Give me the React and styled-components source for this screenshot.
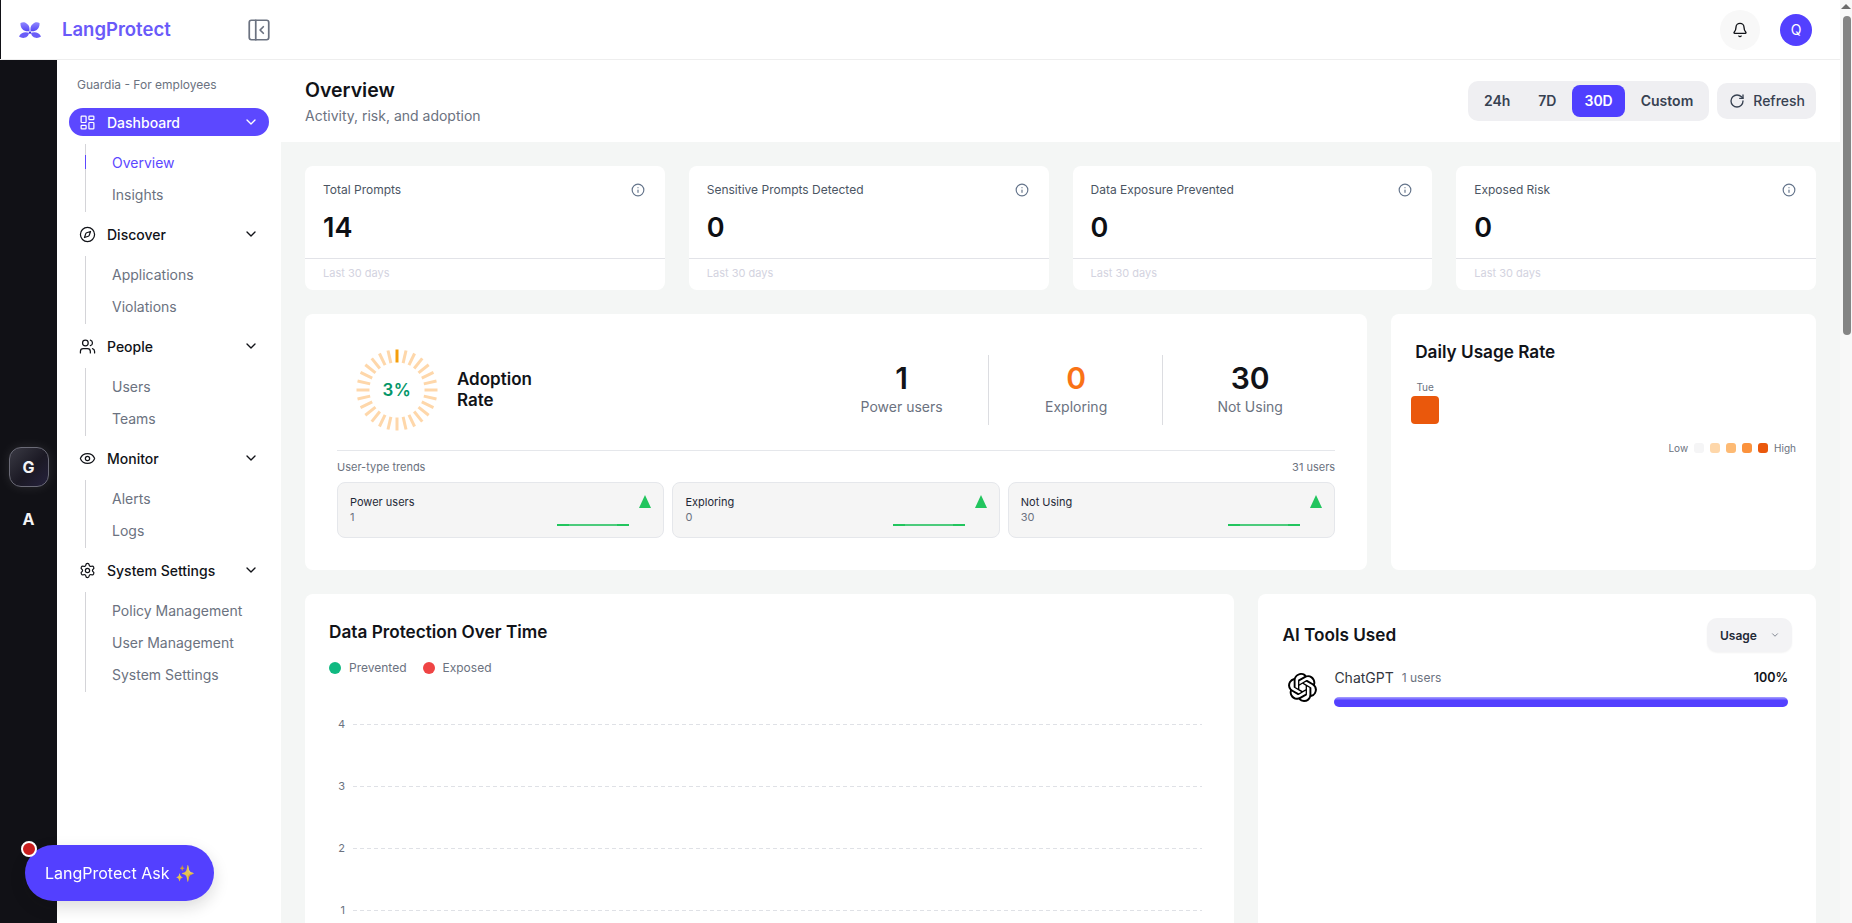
import styled, { createGlobalStyle } from "styled-components";
import {
  Bell,
  ChevronDown,
  Compass,
  Eye,
  Info,
  LayoutDashboard,
  PanelLeftClose,
  RotateCw,
  Settings,
  Users,
} from "lucide-react";
import { SiOpenai } from "react-icons/si";

const GlobalStyle = createGlobalStyle`
  * {
    box-sizing: border-box;
  }
  html,
  body {
    margin: 0;
    height: 100%;
    overflow: hidden;
  }
  body {
    font-family: Inter, "Noto Sans", sans-serif;
    color: #111318;
    background: #fff;
  }
`;

const Shell = styled.div`
  display: flex;
  height: 100vh;
  overflow: hidden;
`;

const Viewport = styled.div`
  flex: 1;
  min-width: 0;
  display: flex;
  flex-direction: column;
`;

const TopBar = styled.header`
  flex: 0 0 60px;
  display: flex;
  align-items: center;
  background: #fff;
  border-bottom: 1px solid #eeeeee;
`;

const Brand = styled.div`
  width: 281px;
  height: 100%;
  display: flex;
  align-items: center;
  padding-left: 18px;
  border-left: 1px solid #111116;
`;

const BrandName = styled.span`
  margin: 0 0 2px 21px;
  font-size: 18.5px;
  font-weight: 600;
  color: #6a5af9;
`;

const Collapse = styled.div`
  margin-left: auto;
  margin-right: 9px;
  display: flex;
  color: #6b7280;
`;

const TopActions = styled.div`
  margin-left: auto;
  margin-right: 28px;
  display: flex;
  align-items: center;
  gap: 20px;
`;

const BellButton = styled.div`
  width: 40px;
  height: 40px;
  border-radius: 50%;
  background: #f8f8f8;
  display: flex;
  align-items: center;
  justify-content: center;
  color: #111318;
`;

const Avatar = styled.div`
  width: 32px;
  height: 32px;
  border-radius: 50%;
  background: #5340ff;
  color: #fff;
  font-size: 14px;
  font-weight: 400;
  display: flex;
  align-items: center;
  justify-content: center;
`;

const Body = styled.div`
  flex: 1;
  min-height: 0;
  display: flex;
`;

const Rail = styled.nav`
  flex: 0 0 57px;
  background: #111116;
  display: flex;
  flex-direction: column;
  align-items: center;
  justify-content: center;
  gap: 12px;
  padding: 3px 0 0 0;
`;

const RailButton = styled.div`
  width: 40px;
  height: 40px;
  border-radius: 12px;
  display: flex;
  align-items: center;
  justify-content: center;
  font-size: 16px;
  font-weight: 700;
  color: #f4f4f5;
  border: 1px solid ${(p) => (p.$active ? "#6b6b77" : "transparent")};
  background: ${(p) =>
    p.$active ? "linear-gradient(135deg, #3a3a44 0%, #1b1924 55%, #25213d 100%)" : "transparent"};
  box-shadow: ${(p) => (p.$active ? "0 0 12px rgba(255, 255, 255, 0.1)" : "none")};
`;

const Sidebar = styled.aside`
  flex: 0 0 224px;
  background: #fff;
  padding: 17px 12px 0;
`;

const SidebarLabel = styled.div`
  margin: 0 0 15px 8px;
  font-size: 12px;
  line-height: 16px;
  color: #6b7280;
`;

const NavSection = styled.div`
  margin-bottom: 8px;
`;

const NavHeader = styled.div`
  height: 28px;
  display: flex;
  align-items: center;
  gap: 11px;
  padding: 0 10px;
  border-radius: 14px;
  font-size: 14px;
  font-weight: ${(p) => (p.$active ? 500 : 450)};
  color: ${(p) => (p.$active ? "#fff" : "#111318")};
  background: ${(p) => (p.$active ? "#5c48ff" : "transparent")};
`;

const NavChevron = styled(ChevronDown)`
  margin-left: auto;
`;

const SubList = styled.div`
  margin: 8px 0 0 16px;
  padding: 2px 0 2px 26px;
  border-left: 1px solid #d4d4d8;
`;

const SubItem = styled.div`
  position: relative;
  height: 32px;
  display: flex;
  align-items: center;
  font-size: 14px;
  font-weight: 400;
  color: ${(p) => (p.$active ? "#5c48ff" : "#6b7280")};

  &::before {
    content: "";
    display: ${(p) => (p.$active ? "block" : "none")};
    position: absolute;
    left: -27px;
    top: 9px;
    width: 1px;
    height: 14px;
    background: #5c48ff;
  }
`;

const AskWrap = styled.div`
  position: fixed;
  left: 25px;
  bottom: 22px;
`;

const AskButton = styled.div`
  width: 189px;
  height: 56px;
  border-radius: 28px;
  background: #5340ff;
  color: #fff;
  font-size: 16px;
  display: flex;
  align-items: center;
  padding-left: 20px;
  white-space: nowrap;
  box-shadow: 0 6px 16px rgba(17, 17, 22, 0.15);
`;

const AskSpark = styled.span`
  margin-left: 6px;
  opacity: 0.85;
`;

const AskDot = styled.span`
  position: absolute;
  left: -4px;
  top: -4px;
  width: 16px;
  height: 16px;
  border-radius: 50%;
  background: #c81e1e;
  border: 2px solid #fff;
`;

const Main = styled.main`
  flex: 1;
  min-width: 0;
  display: flex;
  flex-direction: column;
  overflow: hidden;
`;

const PageHead = styled.div`
  flex: 0 0 82px;
  display: flex;
  align-items: center;
  justify-content: space-between;
  padding: 0 24px;
  background: #fff;
`;

const PageHeadText = styled.div`
  padding-top: 1px;
`;

const PageTitle = styled.h1`
  margin: 0;
  font-size: 19.5px;
  line-height: 26px;
  font-weight: 600;
  color: #111318;
`;

const PageSub = styled.p`
  margin: 3px 0 0;
  font-size: 14px;
  line-height: 20px;
  color: #6b7280;
`;

const HeadActions = styled.div`
  display: flex;
  align-items: center;
  gap: 8px;
`;

const RangeGroup = styled.div`
  display: flex;
  gap: 4px;
  padding: 4px;
  border-radius: 10px;
  background: #efeff2;
`;

const RangeButton = styled.div`
  height: 32px;
  padding: 0 12px 2px;
  display: flex;
  align-items: center;
  border-radius: 8px;
  font-size: 14px;
  font-weight: 600;
  color: ${(p) => (p.$active ? "#fff" : "#374151")};
  background: ${(p) => (p.$active ? "#4f3fff" : "transparent")};
`;

const RefreshButton = styled.div`
  height: 36px;
  padding: 0 11px 1px 12px;
  display: flex;
  align-items: center;
  gap: 8px;
  border-radius: 10px;
  background: #efeff2;
  font-size: 14px;
  font-weight: 500;
  color: #374151;
`;

const Content = styled.div`
  flex: 1;
  background: #f4f6f5;
  padding: 24px;
  display: flex;
  flex-direction: column;
  gap: 24px;
`;

const StatGrid = styled.div`
  display: grid;
  grid-template-columns: repeat(4, 1fr);
  gap: 24px;
`;

const Card = styled.section`
  background: #fff;
  border-radius: 8px;
`;

const StatTop = styled.div`
  height: 93px;
  padding: 16px 20px 0 18px;
  border-bottom: 1px solid #e2e3e8;
`;

const StatHead = styled.div`
  display: flex;
  align-items: center;
  justify-content: space-between;
  font-size: 12px;
  line-height: 16px;
  font-weight: 400;
  color: #4b5563;
`;

const StatValue = styled.div`
  margin-top: 13px;
  font-size: 27px;
  line-height: 34px;
  font-weight: 600;
  color: #0d0f14;
`;

const StatFoot = styled.div`
  height: 31px;
  padding: 0 0 3px 18px;
  display: flex;
  align-items: center;
  font-size: 11px;
  color: #d3d3e0;
`;

const InsightRow = styled.div`
  display: grid;
  grid-template-columns: 5fr 2fr;
  gap: 24px;
`;

const AdoptionCard = styled(Card)`
  height: 256px;
  padding: 32px 32px 0;
`;

const AdoptionTop = styled.div`
  height: 105px;
  display: flex;
  align-items: flex-start;
  border-bottom: 1px solid #e5e7eb;
`;

const GaugeWrap = styled.div`
  position: relative;
  width: 84px;
  height: 84px;
  margin: 2px 18px 0 18px;
`;

const GaugeValue = styled.div`
  position: absolute;
  inset: 0;
  display: flex;
  align-items: center;
  justify-content: center;
  font-size: 17px;
  font-weight: 600;
  letter-spacing: 0.5px;
  color: #059669;
`;

const AdoptionLabel = styled.div`
  align-self: flex-start;
  margin-top: 23px;
  font-size: 17px;
  line-height: 21px;
  font-weight: 600;
  color: #111318;
`;

const AdoptionStats = styled.div`
  margin: 9px -1px 0 auto;
  display: flex;
`;

const AdoptionStat = styled.div`
  width: 174px;
  height: 70px;
  padding-left: 1px;
  display: flex;
  flex-direction: column;
  align-items: center;
  border-left: ${(p) => (p.$first ? "none" : "1px solid #dcdde1")};
`;

const AdoptionNumber = styled.div`
  margin-top: 5px;
  font-size: 30px;
  line-height: 36px;
  font-weight: 600;
  color: ${(p) => p.$color || "#111318"};
`;

const AdoptionName = styled.div`
  margin-top: 1px;
  font-size: 14px;
  line-height: 20px;
  color: #6b7280;
`;

const TrendHead = styled.div`
  display: flex;
  justify-content: space-between;
  margin: 9px 0 8px;
  font-size: 11px;
  line-height: 14px;
  color: #6b7280;
`;

const TrendGrid = styled.div`
  display: grid;
  grid-template-columns: repeat(3, 1fr);
  gap: 8px;
`;

const TrendCard = styled.div`
  height: 56px;
  display: flex;
  justify-content: space-between;
  padding: 0 12px;
  border: 1px solid #e5e7eb;
  border-radius: 8px;
  background: #f5f5f5;
`;

const TrendText = styled.div`
  padding-top: 12px;
  font-size: 11px;
  line-height: 15px;
  color: #1f2937;

  span {
    display: block;
    color: #6b7280;
  }
`;

const TrendGraph = styled.div`
  display: flex;
  align-items: flex-start;
  gap: 10px;
`;

const Spark = styled.div`
  width: 72px;
  height: 2px;
  margin-top: 41px;
  background: linear-gradient(
    90deg,
    #22c55e 0 12px,
    #4ccb7c 12px 60px,
    #22c55e 60px 72px
  );
`;

const UpMark = styled.div`
  width: 0;
  height: 0;
  margin-top: 12px;
  border-left: 6px solid transparent;
  border-right: 6px solid transparent;
  border-bottom: 13px solid #22c55e;
`;

const DailyCard = styled(Card)`
  padding: 26px 20px 0;
`;

const CardTitle = styled.h2`
  margin: 0;
  font-size: 17.2px;
  line-height: 24px;
  font-weight: 600;
  color: #111318;
`;

const DailyTitle = styled(CardTitle)`
  margin-left: 4px;
`;

const DayColumn = styled.div`
  width: 28px;
  margin-top: 16px;
  display: flex;
  flex-direction: column;
  align-items: center;
  gap: 2px;
  font-size: 10px;
  line-height: 14px;
  color: #6b7280;
`;

const DayCell = styled.div`
  width: 28px;
  height: 28px;
  border-radius: 4px;
  background: #ea580c;
`;

const HeatLegend = styled.div`
  margin-top: 17px;
  display: flex;
  justify-content: flex-end;
  align-items: center;
  gap: 6px;
  font-size: 10px;
  line-height: 14px;
  color: #6b7280;
`;

const HeatSwatch = styled.span`
  width: 10px;
  height: 10px;
  border-radius: 3px;
  background: ${(p) => p.$color};
`;

const BottomRow = styled.div`
  display: grid;
  grid-template-columns: 5fr 3fr;
  gap: 24px;
`;

const ChartCard = styled(Card)`
  height: 420px;
  padding: 26px 32px 0 24px;
`;

const ChartLegend = styled.div`
  margin-top: 16px;
  display: flex;
  gap: 16px;
  font-size: 12px;
  line-height: 16px;
  color: #6b7280;
`;

const LegendItem = styled.span`
  display: flex;
  align-items: center;
  gap: 8px;

  &::before {
    content: "";
    width: 12px;
    height: 12px;
    border-radius: 50%;
    background: ${(p) => p.$color};
  }
`;

const ChartGrid = styled.div`
  margin-top: 17px;
`;

const ChartRow = styled.div`
  height: 62px;
  display: flex;
  align-items: center;
  gap: 8px;
  font-size: 11px;
  color: #6b7280;

  span {
    width: 16px;
    text-align: right;
  }
`;

const ChartLine = styled.div`
  flex: 1;
  height: 1px;
  background: repeating-linear-gradient(90deg, #dfe1e6 0 4px, transparent 4px 7px);
`;

const ToolsCard = styled(Card)`
  padding: 24px 24px 0;
`;

const ToolsHead = styled.div`
  display: flex;
  align-items: center;
  justify-content: space-between;
`;

const SortButton = styled.div`
  width: 85px;
  height: 34px;
  padding: 0 12px 0 13px;
  display: flex;
  align-items: center;
  justify-content: space-between;
  border-radius: 10px;
  background: #f3f3f5;
  box-shadow: 0 1px 2px rgba(0, 0, 0, 0.05);
  font-size: 12px;
  font-weight: 600;
  color: #1f2937;

  svg {
    color: #6b7280;
  }
`;

const ToolRow = styled.div`
  margin: 17px 4px 0 6px;
  display: flex;
  gap: 17px;
`;

const ToolIcon = styled.div`
  margin-top: 4px;
  display: flex;
`;

const ToolBody = styled.div`
  flex: 1;
`;

const ToolMeta = styled.div`
  display: flex;
  align-items: center;
  gap: 8px;
  font-size: 14px;
  line-height: 18px;
  color: #333740;
`;

const ToolUsers = styled.span`
  font-size: 12px;
  color: #6b7280;
`;

const ToolShare = styled.span`
  margin-left: auto;
  font-size: 12.5px;
  font-weight: 600;
  color: #111318;
`;

const ToolBar = styled.div`
  height: 10px;
  margin-top: 10px;
  border-radius: 5px;
  background: linear-gradient(180deg, #a9a2ff 0%, #5340ff 35%, #5340ff 100%);
`;

const ScrollTrack = styled.div`
  flex: 0 0 12px;
  background: #f8f8f8;
  display: flex;
  flex-direction: column;
  align-items: center;
  padding: 4px 0 0 3px;
`;

const ScrollArrow = styled.div`
  width: 0;
  height: 0;
  margin-left: -3px;
  border-left: 5px solid transparent;
  border-right: 5px solid transparent;
  border-bottom: 5px solid #6c6c6c;
`;

const ScrollThumb = styled.div`
  width: 8px;
  height: 319px;
  margin: 7px 1px 0 0;
  border-radius: 4px;
  background: #858585;
`;

const Logo = () => (
  <svg width="22" height="16" viewBox="0 0 22 16">
    <defs>
      <linearGradient id="wing" x1="0" y1="0" x2="0" y2="1">
        <stop offset="0" stopColor="#8f86ff" />
        <stop offset="1" stopColor="#5446f5" />
      </linearGradient>
    </defs>
    <path d="M10.4 9.2C5 10 1 6.5 1.5 1 4-.3 7 .5 8 2c2 1 3 4 2.4 7.2Z" fill="url(#wing)" />
    <path d="M11.6 9.2C17 10 21 6.5 20.5 1 18-.3 15 .5 14 2c-2 1-3 4-2.4 7.2Z" fill="url(#wing)" />
    <path d="M10 10.8C6 9.6 2 10.4 0 14.6 3.5 17 9.5 16.2 10 10.8Z" fill="#6a5df8" />
    <path d="M12 10.8C16 9.6 20 10.4 22 14.6 18.5 17 12.5 16.2 12 10.8Z" fill="#6a5df8" />
    <rect x="10" y="9.6" width="2" height="2" fill="#3b2fe0" />
  </svg>
);

const Gauge = () => (
  <svg width="84" height="84" viewBox="0 0 84 84">
    {Array.from({ length: 28 }, (_, i) => (
      <line
        key={i}
        x1="42"
        y1="1.5"
        x2="42"
        y2="14.5"
        stroke={i === 0 ? "#f59e0b" : "#fed7aa"}
        strokeWidth="3"
        transform={`rotate(${(i * 360) / 28} 42 42)`}
      />
    ))}
  </svg>
);

const nav = [
  { name: "Dashboard", icon: LayoutDashboard, active: true, items: ["Overview", "Insights"] },
  { name: "Discover", icon: Compass, items: ["Applications", "Violations"] },
  { name: "People", icon: Users, items: ["Users", "Teams"] },
  { name: "Monitor", icon: Eye, items: ["Alerts", "Logs"] },
  {
    name: "System Settings",
    icon: Settings,
    items: ["Policy Management", "User Management", "System Settings"],
  },
];

const stats = [
  { title: "Total Prompts", value: "14" },
  { title: "Sensitive Prompts Detected", value: "0" },
  { title: "Data Exposure Prevented", value: "0" },
  { title: "Exposed Risk", value: "0" },
];

const adoption = [
  { name: "Power users", value: "1" },
  { name: "Exploring", value: "0", color: "#f97316" },
  { name: "Not Using", value: "30" },
];

const trends = [
  { name: "Power users", value: "1" },
  { name: "Exploring", value: "0" },
  { name: "Not Using", value: "30" },
];

const heat = ["#f5f5f6", "#fed7aa", "#fdba74", "#fb923c", "#ea580c"];

export default function App() {
  return (
    <Shell>
      <GlobalStyle />
      <Viewport>
        <TopBar>
          <Brand>
            <Logo />
            <BrandName>LangProtect</BrandName>
            <Collapse>
              <PanelLeftClose size={26} strokeWidth={1.6} />
            </Collapse>
          </Brand>
          <TopActions>
            <BellButton>
              <Bell size={16} />
            </BellButton>
            <Avatar>Q</Avatar>
          </TopActions>
        </TopBar>
        <Body>
          <Rail>
            <RailButton $active>G</RailButton>
            <RailButton>A</RailButton>
          </Rail>
          <Sidebar>
            <SidebarLabel>Guardia - For employees</SidebarLabel>
            {nav.map((section) => (
              <NavSection key={section.name}>
                <NavHeader $active={section.active}>
                  <section.icon size={17} strokeWidth={1.75} />
                  {section.name}
                  <NavChevron size={16} />
                </NavHeader>
                <SubList>
                  {section.items.map((item) => (
                    <SubItem key={item} $active={item === "Overview"}>
                      {item}
                    </SubItem>
                  ))}
                </SubList>
              </NavSection>
            ))}
          </Sidebar>
          <Main>
            <PageHead>
              <PageHeadText>
                <PageTitle>Overview</PageTitle>
                <PageSub>Activity, risk, and adoption</PageSub>
              </PageHeadText>
              <HeadActions>
                <RangeGroup>
                  <RangeButton>24h</RangeButton>
                  <RangeButton>7D</RangeButton>
                  <RangeButton $active>30D</RangeButton>
                  <RangeButton>Custom</RangeButton>
                </RangeGroup>
                <RefreshButton>
                  <RotateCw size={16} />
                  Refresh
                </RefreshButton>
              </HeadActions>
            </PageHead>
            <Content>
              <StatGrid>
                {stats.map((stat) => (
                  <Card key={stat.title}>
                    <StatTop>
                      <StatHead>
                        {stat.title}
                        <Info size={14} color="#64748b" />
                      </StatHead>
                      <StatValue>{stat.value}</StatValue>
                    </StatTop>
                    <StatFoot>Last 30 days</StatFoot>
                  </Card>
                ))}
              </StatGrid>
              <InsightRow>
                <AdoptionCard>
                  <AdoptionTop>
                    <GaugeWrap>
                      <Gauge />
                      <GaugeValue>3%</GaugeValue>
                    </GaugeWrap>
                    <AdoptionLabel>
                      Adoption
                      <br />
                      Rate
                    </AdoptionLabel>
                    <AdoptionStats>
                      {adoption.map((item, i) => (
                        <AdoptionStat key={item.name} $first={i === 0}>
                          <AdoptionNumber $color={item.color}>{item.value}</AdoptionNumber>
                          <AdoptionName>{item.name}</AdoptionName>
                        </AdoptionStat>
                      ))}
                    </AdoptionStats>
                  </AdoptionTop>
                  <TrendHead>
                    <span>User-type trends</span>
                    <span>31 users</span>
                  </TrendHead>
                  <TrendGrid>
                    {trends.map((trend) => (
                      <TrendCard key={trend.name}>
                        <TrendText>
                          {trend.name}
                          <span>{trend.value}</span>
                        </TrendText>
                        <TrendGraph>
                          <Spark />
                          <UpMark />
                        </TrendGraph>
                      </TrendCard>
                    ))}
                  </TrendGrid>
                </AdoptionCard>
                <DailyCard>
                  <DailyTitle>Daily Usage Rate</DailyTitle>
                  <DayColumn>
                    Tue
                    <DayCell />
                  </DayColumn>
                  <HeatLegend>
                    Low
                    {heat.map((color) => (
                      <HeatSwatch key={color} $color={color} />
                    ))}
                    High
                  </HeatLegend>
                </DailyCard>
              </InsightRow>
              <BottomRow>
                <ChartCard>
                  <CardTitle>Data Protection Over Time</CardTitle>
                  <ChartLegend>
                    <LegendItem $color="#10b981">Prevented</LegendItem>
                    <LegendItem $color="#ef4444">Exposed</LegendItem>
                  </ChartLegend>
                  <ChartGrid>
                    {[4, 3, 2, 1].map((tick) => (
                      <ChartRow key={tick}>
                        <span>{tick}</span>
                        <ChartLine />
                      </ChartRow>
                    ))}
                  </ChartGrid>
                </ChartCard>
                <ToolsCard>
                  <ToolsHead>
                    <CardTitle>AI Tools Used</CardTitle>
                    <SortButton>
                      Usage
                      <ChevronDown size={10} />
                    </SortButton>
                  </ToolsHead>
                  <ToolRow>
                    <ToolIcon>
                      <SiOpenai size={29} color="#000" />
                    </ToolIcon>
                    <ToolBody>
                      <ToolMeta>
                        ChatGPT
                        <ToolUsers>1 users</ToolUsers>
                        <ToolShare>100%</ToolShare>
                      </ToolMeta>
                      <ToolBar />
                    </ToolBody>
                  </ToolRow>
                </ToolsCard>
              </BottomRow>
            </Content>
          </Main>
        </Body>
      </Viewport>
      <ScrollTrack>
        <ScrollArrow />
        <ScrollThumb />
      </ScrollTrack>
      <AskWrap>
        <AskButton>
          LangProtect Ask<AskSpark>✨</AskSpark>
        </AskButton>
        <AskDot />
      </AskWrap>
    </Shell>
  );
}
